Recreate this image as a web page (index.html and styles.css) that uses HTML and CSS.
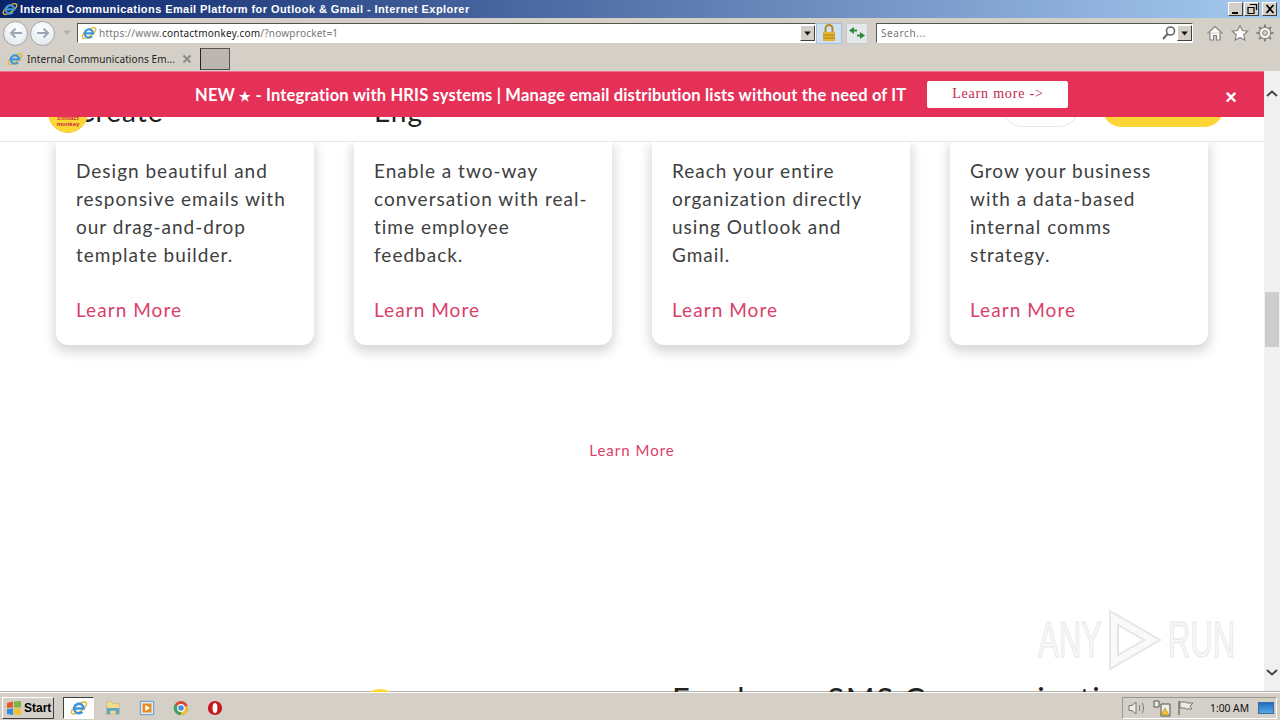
FILE: index.html
```html
<!DOCTYPE html>
<html lang="en">
<head>
    <meta charset="UTF-8">
    <meta name="viewport" content="width=device-width, initial-scale=1.0">
    <title>Internal Communications Email Platform for Outlook &amp; Gmail</title>
    <link rel="stylesheet" href="styles.css">
</head>
<body>

<svg class="defs" width="0" height="0">
    <symbol id="ie" viewBox="0 0 20 20">
        <ellipse cx="10" cy="10" rx="10" ry="4" transform="rotate(-35 10 10)" fill="none" stroke="#e8b530" stroke-width="1.6"/>
        <path d="M5 10.500h10.200A5.300 5.300 0 1 0 13.800 14.200" fill="none" stroke="#3a97dc" stroke-width="2.700"/>
    </symbol>
    <symbol id="arrow-down" viewBox="0 0 16 16">
        <path d="M4 6h8l-4 5z" fill="#111"/>
    </symbol>
</svg>

<div class="titlebar">
    <svg class="title-icon"><use href="#ie"/></svg>
    <span class="title-text">Internal Communications Email Platform for Outlook &amp; Gmail - Internet Explorer</span>
    <div class="win-buttons">
        <div class="win-btn"><svg width="14" height="14"><path d="M3 10h6v2H3z" fill="#000"/></svg></div>
        <div class="win-btn"><svg width="14" height="14"><path d="M5 2.500h6.500v5.500M3 5.500h6v6H3z" fill="none" stroke="#000" stroke-width="1.200"/></svg></div>
        <div class="win-btn close"><svg width="14" height="14"><path d="M3.500 3l7 8M10.500 3l-7 8" stroke="#000" stroke-width="1.800"/></svg></div>
    </div>
</div>

<div class="toolbar">
    <div class="nav-buttons">
        <div class="nav-btn"><svg width="16" height="14"><path d="M14 7H3M7.500 2.500L3 7l4.500 4.500" fill="none" stroke="#9aa6b2" stroke-width="2"/></svg></div>
        <div class="nav-btn"><svg width="16" height="14"><path d="M2 7h11M8.500 2.500L13 7l-4.500 4.500" fill="none" stroke="#9aa6b2" stroke-width="2"/></svg></div>
        <svg class="nav-drop" width="10" height="8"><path d="M1 1.500h8L5 6z" fill="#b5b1aa"/></svg>
    </div>
    <div class="address">
        <svg class="addr-icon"><use href="#ie"/></svg>
        <span class="url"><span class="dim">https://www.</span>contactmonkey.com<span class="dim">/?nowprocket=1</span></span>
        <div class="drop-btn"><svg width="14" height="14"><use href="#arrow-down"/></svg></div>
    </div>
    <div class="lock-btn">
        <svg width="16" height="18" viewBox="0 0 16 18"><path d="M4.500 8V4.500a3.500 3.500 0 0 1 7 0V8" fill="none" stroke="#b88a1c" stroke-width="2"/><path d="M2 8h12v9H2z" fill="#e6b433"/><path d="M2 11h12M2 14h12" stroke="#a87d14"/></svg>
    </div>
    <div class="refresh-btn">
        <svg width="18" height="16" viewBox="0 0 18 16"><path d="M1 5.500L6 2v2.500h3v2H6V9zM17 10.500L12 14v-2.500H9v-2h3V7z" fill="#2e8b3a"/></svg>
    </div>
    <div class="search">
        <span class="search-text">Search...</span>
        <svg width="16" height="16" viewBox="0 0 16 16"><circle cx="9.500" cy="6" r="4" fill="none" stroke="#666" stroke-width="1.600"/><path d="M6.500 9L2 14" stroke="#666" stroke-width="2"/></svg>
        <div class="drop-btn"><svg width="14" height="14"><use href="#arrow-down"/></svg></div>
    </div>
    <div class="tool-icons">
        <svg width="18" height="18" viewBox="0 0 18 18"><path d="M1.500 9.500L9 2.500l7.500 7M4 8.500V16h3.500v-4.500h3V16H14V8.500" fill="#fff" stroke="#85827c" stroke-width="1.200"/></svg>
        <svg width="18" height="18" viewBox="0 0 18 18"><path d="M9 1.500l2.300 5 5.400.6-4 3.700 1.100 5.400L9 13.500l-4.800 2.700 1.100-5.400-4-3.700 5.400-.6z" fill="#fff" stroke="#85827c" stroke-width="1.100"/></svg>
        <svg width="18" height="18" viewBox="0 0 18 18"><circle cx="9" cy="9" r="5.800" fill="#f4f2ee" stroke="#85827c" stroke-width="1.100"/><circle cx="9" cy="9" r="2.400" fill="#d4d0c8" stroke="#85827c"/><path d="M9 .5v3M9 14.500v3M.5 9h3M14.500 9h3M3 3l2 2M13 13l2 2M15 3l-2 2M5 13l-2 2" stroke="#85827c" stroke-width="2"/></svg>
    </div>
</div>

<div class="tabrow">
    <div class="tab">
        <svg class="tab-icon"><use href="#ie"/></svg>
        <span class="tab-text">Internal Communications Em...</span>
        <svg width="10" height="10"><path d="M1.500 1.500l7 7M8.500 1.500l-7 7" stroke="#8d8a85" stroke-width="2"/></svg>
    </div>
    <div class="new-tab"></div>
</div>

<div class="viewport">
    <div class="page">
        <div class="banner">
            <span class="banner-text">NEW <span class="star">★</span> - Integration with HRIS systems | Manage email distribution lists without the need of IT</span>
            <a class="banner-btn">Learn more -&gt;</a>
            <span class="banner-close">×</span>
        </div>

        <div class="site-header">
            <h3 class="peek">Create</h3>
            <h3 class="peek">Eng</h3>
            <div class="logo"><span>contact<br>monkey</span></div>
            <div class="header-actions">
                <div class="pill-outline"></div>
                <div class="pill-yellow"></div>
            </div>
        </div>

        <div class="cards">
            <div class="card">
                <p>Design beautiful and responsive emails with our drag-and-drop template builder.</p>
                <a class="card-link">Learn More</a>
            </div>
            <div class="card">
                <p>Enable a two-way conversation with real-time employee feedback.</p>
                <a class="card-link">Learn More</a>
            </div>
            <div class="card">
                <p>Reach your entire organization directly using Outlook and Gmail.</p>
                <a class="card-link">Learn More</a>
            </div>
            <div class="card">
                <p>Grow your business with a data-based internal comms strategy.</p>
                <a class="card-link">Learn More</a>
            </div>
        </div>

        <a class="center-link">Learn More</a>

        <div class="next-section">
            <div class="next-art"></div>
            <h2>Employee SMS Communication</h2>
        </div>

        <div class="watermark">
            <span class="wm-word">ANY</span>
            <svg width="60" height="64" viewBox="0 0 60 64"><path d="M6 3l50 29L6 61zM14 17v30l26-15z" fill="#f9f9f9" fill-rule="evenodd" stroke="#e6e6e6" stroke-width="2"/></svg>
            <span class="wm-word">RUN</span>
        </div>
    </div>

    <div class="scrollbar">
        <svg width="16" height="16"><path d="M3 10l5-4.500 5 4.500" fill="none" stroke="#444" stroke-width="2"/></svg>
        <div class="scroll-track"><div class="scroll-thumb"></div></div>
        <svg width="16" height="16"><path d="M3 6l5 4.500L13 6" fill="none" stroke="#444" stroke-width="2"/></svg>
    </div>
</div>

<div class="taskbar">
    <div class="start">
        <svg width="16" height="16" viewBox="0 0 16 16"><path d="M1 3l6-1.500v6L1 8z" fill="#e2582a"/><path d="M8 1.500L15 1v6.500H8z" fill="#7cb342"/><path d="M1 9l6-.5V15l-6-1z" fill="#2f8fd8"/><path d="M8 8.500h7V15l-7-.5z" fill="#f5c02e"/></svg>
        <span>Start</span>
    </div>
    <div class="task-active"><svg class="task-icon"><use href="#ie"/></svg></div>
    <svg class="task-app" viewBox="0 0 18 18"><path d="M2 2h6l1 2h7v12H2z" fill="#f3dc8c" stroke="#c9b163" stroke-width=".7"/><path d="M2 9h14v7h-4v-4H6v4H2z" fill="#5fa6c9"/></svg>
    <svg class="task-app" viewBox="0 0 18 18"><path d="M1.500 1.500h15v15h-15z" fill="#dfe9f2" stroke="#5f8fc0"/><path d="M4 4h10v10H4z" fill="#e98a1e"/><path d="M7 5.500L12.500 9 7 12.500z" fill="#fff"/></svg>
    <svg class="task-app" viewBox="0 0 18 18"><circle cx="9" cy="9" r="8" fill="#d9483b"/><path d="M9 9L16.500 6.500A8 8 0 0 1 9 17z" fill="#f2c230"/><path d="M9 9L9 17A8 8 0 0 1 2 5z" fill="#3ba55d"/><circle cx="9" cy="9" r="3.800" fill="#4a8de0" stroke="#fff" stroke-width="1.300"/></svg>
    <svg class="task-app" viewBox="0 0 18 18"><circle cx="9" cy="9" r="8" fill="#c8161d"/><ellipse cx="9" cy="9" rx="2.800" ry="6" fill="#fff"/></svg>

    <div class="tray">
        <svg width="20" height="16" viewBox="0 0 20 16"><path d="M2 5.500h3L9 2v12l-4-3.500H2z" fill="#eeece6" stroke="#77746e"/><path d="M12 5c1 2 1 4 0 6M15 3c2 3 2 7 0 10" fill="none" stroke="#77746e"/></svg>
        <svg width="18" height="18" viewBox="0 0 18 18"><path d="M1 2h5v6H1zM8 5h9v12H8z" fill="#eeece6" stroke="#55534e"/><path d="M12 9l4 7H8z" fill="#f5c02e" stroke="#9a7a10" stroke-width=".5"/></svg>
        <svg width="18" height="16" viewBox="0 0 18 16"><path d="M2 1v14" stroke="#77746e" stroke-width="1.500"/><path d="M3 2h6l1 1h6l-3 3 2 3H9L8 8H3z" fill="#eeece6" stroke="#77746e"/></svg>
        <span class="clock">1:00 AM</span>
        <div class="show-desktop"></div>
    </div>
</div>

</body>
</html>
```

FILE: styles.css
```css
* {
    box-sizing: border-box;
}

html, body {
    height: 720px;
}

body {
    margin: 0;
    overflow: hidden;
    display: flex;
    flex-direction: column;
    background-color: #d4d0c8;
    font-family: "Noto Sans", Tahoma, sans-serif;
}

.defs {
    position: absolute;
}

/* window title */
.titlebar {
    height: 18px;
    display: flex;
    align-items: center;
    padding: 0 3px 0 2px;
    background: linear-gradient(to right, #0a246a, #a6caf0);
}

.title-icon {
    width: 16px;
    height: 16px;
    margin-right: 2px;
}

.title-text {
    color: #fff;
    font-family: "Liberation Sans", sans-serif;
    font-size: 11px;
    font-weight: bold;
    letter-spacing: 0.42px;
    white-space: nowrap;
}

.win-buttons {
    margin-left: auto;
    display: flex;
    gap: 1px;
}

.win-btn {
    width: 15px;
    height: 14px;
    background-color: #d4d0c8;
    border: 1px solid;
    border-color: #fff #404040 #404040 #fff;
    display: flex;
    align-items: center;
    justify-content: center;
}

.win-btn.close {
    margin-left: 2px;
}

/* address bar row */
.toolbar {
    height: 28px;
    display: flex;
    align-items: center;
    padding: 2px 0 0 3px;
}

.nav-buttons {
    width: 74px;
    display: flex;
    align-items: center;
    gap: 2px;
}

.nav-btn {
    width: 25px;
    height: 25px;
    border-radius: 50%;
    border: 1px solid #a2a6ab;
    background: radial-gradient(circle at 50% 30%, #fff, #dfe5ea);
    display: flex;
    align-items: center;
    justify-content: center;
}

.nav-drop {
    margin-left: 5px;
}

.address {
    width: 739px;
    height: 20px;
    display: flex;
    align-items: center;
    background-color: #fff;
    border: 1px solid;
    border-color: #55534e #fff #fff #55534e;
    padding-left: 3px;
}

.addr-icon {
    width: 16px;
    height: 16px;
    margin-right: 2px;
}

.url {
    font-size: 10px;
    color: #222;
    letter-spacing: 0.22px;
}

.dim {
    color: #777;
}

.drop-btn {
    margin-left: auto;
    width: 15px;
    height: 16px;
    background-color: #d4d0c8;
    border: 1px solid;
    border-color: #fff #404040 #404040 #fff;
    display: flex;
    align-items: center;
    justify-content: center;
}

.lock-btn {
    width: 26px;
    height: 21px;
    background-color: #cfe0f2;
    border: 1px solid #a9c0d8;
    display: flex;
    align-items: center;
    justify-content: center;
}

.refresh-btn {
    width: 22px;
    height: 21px;
    margin-left: 4px;
    background-color: #e4e8ea;
    border: 1px solid #c8ccce;
    border-radius: 2px;
    display: flex;
    align-items: center;
    justify-content: center;
}

.search {
    width: 317px;
    height: 20px;
    margin-left: 8px;
    display: flex;
    align-items: center;
    background-color: #fff;
    border: 1px solid;
    border-color: #55534e #fff #fff #55534e;
    padding-left: 4px;
}

.search-text {
    flex: 1;
    font-size: 10px;
    color: #777;
    letter-spacing: 0.6px;
}

.tool-icons {
    display: flex;
    gap: 7px;
    margin-left: 13px;
}

/* tab row */
.tabrow {
    height: 25px;
    display: flex;
    align-items: flex-end;
    padding-bottom: 1px;
}

.tab {
    width: 197px;
    height: 22px;
    display: flex;
    align-items: center;
    padding: 0 5px 0 7px;
}

.tab-icon {
    width: 16px;
    height: 16px;
    margin-right: 4px;
}

.tab-text {
    flex: 1;
    font-size: 10px;
    color: #222;
    letter-spacing: 0.1px;
    white-space: nowrap;
}

.new-tab {
    width: 30px;
    height: 22px;
    margin-left: 3px;
    background-color: #bdb6b0;
    border: 1px solid;
    border-color: #55534e #55534e #55534e #222;
}

/* page area */
.viewport {
    flex: 1;
    display: flex;
    min-height: 0;
    background-color: #fff;
}

.page {
    flex: 1;
    position: relative;
    overflow: hidden;
    font-family: Lato, "Open Sans", sans-serif;
    color: #333;
}

.banner {
    position: absolute;
    top: 0;
    left: 0;
    right: 0;
    height: 46px;
    z-index: 3;
    display: flex;
    align-items: center;
    padding: 0 27px 0 195px;
    background-color: #e53157;
    border-top: 1px solid #ef6f8c;
    color: #fff;
}

.banner-text {
    font-size: 16.5px;
    font-weight: bold;
    white-space: nowrap;
    letter-spacing: 0.17px;
}

.star {
    font-size: 13px;
}

.banner-btn {
    width: 141px;
    height: 27px;
    margin-left: 21px;
    display: flex;
    align-items: center;
    justify-content: center;
    background-color: #fff;
    border-radius: 2px;
    color: #c8264c;
    font-family: "Liberation Serif", serif;
    font-size: 14px;
    letter-spacing: 0.8px;
    padding-bottom: 1px;
}

.banner-close {
    margin-left: auto;
    margin-top: 6px;
    font-size: 20px;
    font-weight: bold;
    font-family: "Liberation Sans", sans-serif;
}

.site-header {
    position: relative;
    z-index: 2;
    height: 71px;
    display: flex;
    align-items: flex-end;
    background-color: #fff;
    border-bottom: 1px solid #e6e6e6;
    padding: 0 40px 14px 76px;
}

.logo {
    position: absolute;
    left: 48px;
    top: 22px;
    width: 40px;
    height: 40px;
    border-radius: 50%;
    background-color: #fdd835;
    border: 1px solid #f7c948;
    color: #c8264c;
    font-family: "Liberation Sans", sans-serif;
    font-size: 6px;
    font-weight: bold;
    line-height: 6px;
    text-align: center;
    padding-top: 21px;
}

.peek {
    width: 298px;
    margin: 0;
    font-size: 28px;
    font-weight: 400;
    line-height: 32px;
    letter-spacing: 1px;
    color: #222;
}

.header-actions {
    position: absolute;
    right: 40px;
    bottom: 14px;
    display: flex;
    gap: 23px;
}

.pill-outline {
    width: 77px;
    height: 40px;
    border: 1px solid #e6e6e6;
    border-radius: 20px;
}

.pill-yellow {
    width: 122px;
    height: 40px;
    border-radius: 20px;
    background-color: #fdd536;
}

.cards {
    display: flex;
    gap: 40px;
    padding-left: 56px;
}

.card {
    width: 258px;
    height: 203px;
    padding: 15px 20px 0;
    background-color: #fff;
    border-radius: 0 0 12px 12px;
    box-shadow: 0 5px 12px 2px rgba(0, 0, 0, 0.16);
}

.card p {
    margin: 0 0 29px;
    font-size: 19px;
    line-height: 28px;
    letter-spacing: 1px;
    color: #404040;
}

.card-link {
    font-size: 19px;
    letter-spacing: 1.05px;
    color: #d8406a;
}

.center-link {
    display: block;
    margin-top: 96px;
    text-align: center;
    font-size: 15px;
    letter-spacing: 1px;
    color: #d8406a;
}

.next-section {
    display: flex;
    margin-top: 221px;
    padding-left: 360px;
}

.next-art {
    width: 40px;
    height: 40px;
    margin-top: 9px;
    border-radius: 50%;
    background-color: #fdd835;
}

.next-section h2 {
    margin: 0 0 0 272px;
    font-size: 31px;
    font-weight: 400;
    line-height: 36px;
    letter-spacing: 1.6px;
    color: #222;
    white-space: nowrap;
}

.watermark {
    position: absolute;
    left: 1038px;
    top: 537px;
    display: flex;
    align-items: center;
    gap: 4px;
    font-family: "Liberation Sans", sans-serif;
    font-size: 50px;
    color: #f8f8f8;
    -webkit-text-stroke: 1px #e6e6e6;
}

.wm-word {
    width: 62px;
    transform: scaleX(0.62);
    transform-origin: left center;
}

/* scrollbar */
.scrollbar {
    width: 16px;
    display: flex;
    flex-direction: column;
    background-color: #f0f0f0;
    padding: 15px 0 12px;
}

.scroll-track {
    flex: 1;
    padding-top: 190px;
}

.scroll-thumb {
    height: 55px;
    margin: 0 1px;
    background-color: #cdcdcd;
}

/* taskbar */
.taskbar {
    height: 28px;
    display: flex;
    align-items: center;
    padding: 2px 3px 0 2px;
    background-color: #d4d0c8;
    border-top: 1px solid #fff;
    box-shadow: 0 -1px 0 #b5b1aa;
}

.start {
    width: 52px;
    height: 22px;
    display: flex;
    align-items: center;
    gap: 2px;
    padding-left: 3px;
    border: 1px solid;
    border-color: #fff #404040 #404040 #fff;
    font-family: "Liberation Sans", sans-serif;
    font-size: 12px;
    font-weight: bold;
    color: #000;
}

.task-active {
    width: 31px;
    height: 22px;
    margin: 0 11px 0 9px;
    display: flex;
    align-items: center;
    justify-content: center;
    background-color: #fff;
    border: 1px solid;
    border-color: #404040 #fff #fff #404040;
}

.task-icon {
    width: 18px;
    height: 18px;
}

.task-app {
    width: 16px;
    height: 16px;
    margin-right: 18px;
}

.tray {
    margin-left: auto;
    width: 155px;
    height: 22px;
    display: flex;
    align-items: center;
    gap: 6px;
    padding-left: 4px;
    border: 1px solid;
    border-color: #9a9791 #fff #fff #9a9791;
}

.clock {
    margin-left: 9px;
    font-size: 10.3px;
    color: #111;
    white-space: nowrap;
}

.show-desktop {
    width: 16px;
    height: 12px;
    margin-left: 3px;
    background: linear-gradient(#1d6fc4, #5aa8e6);
    border: 1px solid #3c6a99;
}
```
